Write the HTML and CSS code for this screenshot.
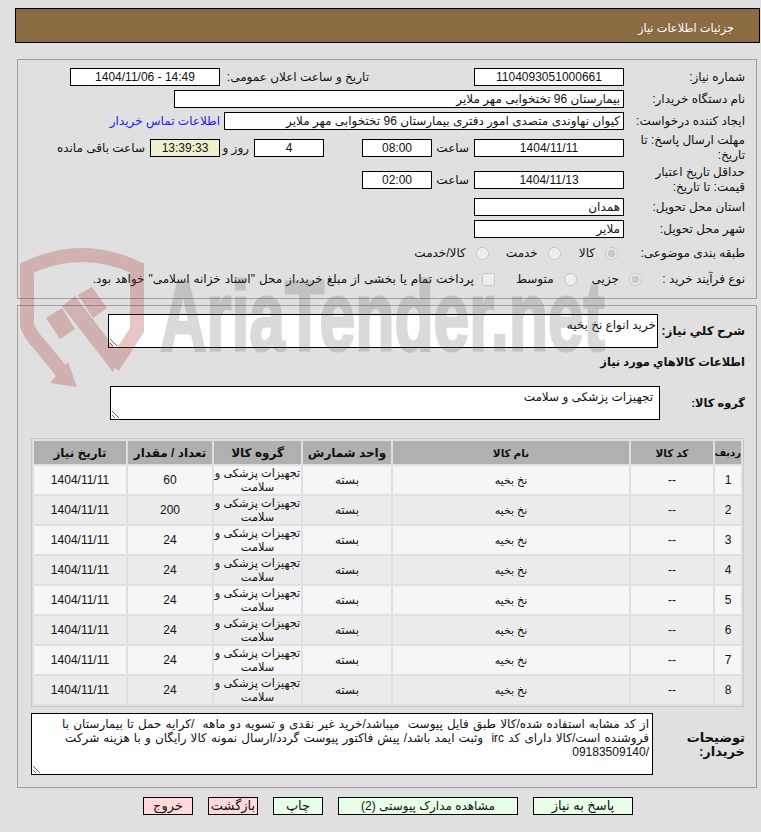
FILE: index.html
```html
<!DOCTYPE html>
<html lang="fa" dir="rtl">
<head>
<meta charset="utf-8">
<title>جزئیات اطلاعات نیاز</title>
<link rel="stylesheet" href="styles.css">
</head>
<body>
<header class="title-bar">جزئیات اطلاعات نیاز</header>

<section class="panel panel-top">
  <div class="row">
    <span class="label">شماره نیاز:</span>
    <span class="box w150 center">1104093051000661</span>
    <span class="label-public">تاریخ و ساعت اعلان عمومی:</span>
    <span class="box w150 center"><bdi>1404/11/06 - 14:49</bdi></span>
  </div>
  <div class="row">
    <span class="label">نام دستگاه خریدار:</span>
    <span class="box w450">بیمارستان 96 تختخوابی مهر ملایر</span>
  </div>
  <div class="row">
    <span class="label">ایجاد کننده درخواست:</span>
    <span class="box w400">کیوان نهاوندی متصدی امور دفتری بیمارستان 96 تختخوابی مهر ملایر</span>
    <a class="contact" href="#">اطلاعات تماس خریدار</a>
  </div>
  <div class="row row-tall">
    <span class="label">مهلت ارسال پاسخ: تا تاریخ:</span>
    <span class="box w150 center">1404/11/11</span>
    <span class="word w42">ساعت</span>
    <span class="box w70 center">08:00</span>
    <span class="spacer-38"></span>
    <span class="box w70 center">4</span>
    <span class="word w34">روز و</span>
    <span class="box w70 center timer">13:39:33</span>
    <span class="word">ساعت باقی مانده</span>
  </div>
  <div class="row row-tall">
    <span class="label">حداقل تاریخ اعتبار قیمت: تا تاریخ:</span>
    <span class="box w150 center">1404/11/13</span>
    <span class="word w42">ساعت</span>
    <span class="box w70 center">02:00</span>
  </div>
  <div class="row">
    <span class="label">استان محل تحویل:</span>
    <span class="box w150">همدان</span>
  </div>
  <div class="row">
    <span class="label">شهر محل تحویل:</span>
    <span class="box w150">ملایر</span>
  </div>
  <div class="row row-option">
    <span class="label">طبقه بندی موضوعی:</span>
    <label class="opt first"><input type="radio" name="kind" checked disabled>کالا</label>
    <label class="opt kind2"><input type="radio" name="kind" disabled>خدمت</label>
    <label class="opt kind3"><input type="radio" name="kind" disabled>کالا/خدمت</label>
  </div>
  <div class="row row-option">
    <span class="label label-short">نوع فرآیند خرید :</span>
    <label class="opt first"><input type="radio" name="proc" checked disabled>جزیی</label>
    <label class="opt proc2"><input type="radio" name="proc" disabled>متوسط</label>
    <label class="opt proc3"><input type="checkbox" disabled>پرداخت تمام یا بخشی از مبلغ خرید،از محل "اسناد خزانه اسلامی" خواهد بود.</label>
  </div>
</section>

<section class="panel panel-main">
  <div class="row-area">
    <span class="label-bold w87">شرح کلي نیاز:</span>
    <textarea class="area w550 desc" readonly>خرید انواع نخ بخیه</textarea>
  </div>
  <h2 class="goods-title">اطلاعات کالاهاي مورد نیاز</h2>
  <div class="row-area">
    <span class="label-bold w85">گروه کالا:</span>
    <textarea class="area w550 group" readonly>تجهیزات پزشکی و سلامت</textarea>
  </div>

  <table class="items">
    <thead>
      <tr>
        <th class="c-idx">ردیف</th><th class="c-code">کد کالا</th><th class="c-name">نام کالا</th><th class="c-unit">واحد شمارش</th><th class="c-group">گروه کالا</th><th class="c-qty">تعداد / مقدار</th><th class="c-date">تاریخ نیاز</th>
      </tr>
    </thead>
    <tbody>
      <tr><td>1</td><td>--</td><td class="name">نخ بخیه</td><td>بسته</td><td class="grp">تجهیزات پزشکی و سلامت</td><td>60</td><td>1404/11/11</td></tr>
      <tr><td>2</td><td>--</td><td class="name">نخ بخیه</td><td>بسته</td><td class="grp">تجهیزات پزشکی و سلامت</td><td>200</td><td>1404/11/11</td></tr>
      <tr><td>3</td><td>--</td><td class="name">نخ بخیه</td><td>بسته</td><td class="grp">تجهیزات پزشکی و سلامت</td><td>24</td><td>1404/11/11</td></tr>
      <tr><td>4</td><td>--</td><td class="name">نخ بخیه</td><td>بسته</td><td class="grp">تجهیزات پزشکی و سلامت</td><td>24</td><td>1404/11/11</td></tr>
      <tr><td>5</td><td>--</td><td class="name">نخ بخیه</td><td>بسته</td><td class="grp">تجهیزات پزشکی و سلامت</td><td>24</td><td>1404/11/11</td></tr>
      <tr><td>6</td><td>--</td><td class="name">نخ بخیه</td><td>بسته</td><td class="grp">تجهیزات پزشکی و سلامت</td><td>24</td><td>1404/11/11</td></tr>
      <tr><td>7</td><td>--</td><td class="name">نخ بخیه</td><td>بسته</td><td class="grp">تجهیزات پزشکی و سلامت</td><td>24</td><td>1404/11/11</td></tr>
      <tr><td>8</td><td>--</td><td class="name">نخ بخیه</td><td>بسته</td><td class="grp">تجهیزات پزشکی و سلامت</td><td>24</td><td>1404/11/11</td></tr>
    </tbody>
  </table>

  <div class="row-area row-note">
    <span class="label-bold w92">توضیحات خریدار:</span>
    <textarea class="area w622 note" readonly>از کد مشابه استفاده شده/کالا طبق فایل پیوست  میباشد/خرید غیر نقدی و تسویه دو ماهه  /کرایه حمل تا بیمارستان با فروشنده است/کالا دارای کد irc  وثبت ایمد باشد/ پیش فاکتور پیوست گردد/ارسال نمونه کالا رایگان و با هزینه شرکت /09183509140</textarea>
  </div>
</section>

<nav class="actions">
  <button class="btn green w100 big" type="button">پاسخ به نیاز</button>
  <button class="btn green w180" type="button">مشاهده مدارک پیوستی (2)</button>
  <button class="btn green w50 big" type="button">چاپ</button>
  <button class="btn pink w50 big" type="button">بازگشت</button>
  <button class="btn pink w50 big" type="button">خروج</button>
</nav>

<svg class="watermark" width="610" height="150" viewBox="0 0 610 150" aria-hidden="true">
  <g class="wm-red">
    <path class="wm-shield" d="M103 117 L127 80 L127 18 Q72 -8 17 18 L17 75 Q20 85 30 95 L52 122"/>
    <polygon points="58,112 67,137 40,133"/>
    <polygon points="36,68 52,58 65,79 50,89"/>
    <polygon points="68,45 82,37 97,58 83,68"/>
    <polygon points="52,56 65,46 108,102 103,122"/>
  </g>
  <text class="wm-text" x="150" y="100" textLength="445" lengthAdjust="spacingAndGlyphs">AriaTender.net</text>
</svg>
</body>
</html>
```

FILE: styles.css
```css
* { box-sizing: border-box; }
html, body { background: #e0e0e0; }
body {
  margin: 8px 1px 0 15px;
  position: relative;
  font: 12px/14px "Liberation Sans", "DejaVu Sans", sans-serif;
  color: #111;
}
.title-bar {
  height: 35px;
  background: #8b6b41;
  border: 1px solid #000;
  color: #fff;
  padding: 0 25px;
  font-size: 11.4px;
  line-height: 38px;
}
.panel {
  margin: 0 3px 0 2px;
  border: 1px solid #a0a0a0;
}
.panel-top { margin-top: 16px; padding: 6px 11px; height: 240px; }
.panel-main { margin-top: 6px; padding: 8px 11px 12px; height: 483px; }
.row { display: flex; align-items: center; height: 22px; }
.row-tall { height: 32px; }
.row-option { height: 26px; }
.label { width: 121px; flex: none; padding-left: 8px; line-height: 15px; }
.label-short { width: 97px; }
.label-public { width: 149px; flex: none; margin-right: 105px; white-space: nowrap; }
.box {
  display: block;
  flex: none;
  height: 18px;
  line-height: 16px;
  background: #fff;
  border: 1px solid #000;
  padding: 0 3px;
  white-space: nowrap;
  overflow: hidden;
}
.center { text-align: center; }
.w150 { width: 150px; }
.w450 { width: 450px; }
.w400 { width: 400px; }
.w70 { width: 70px; }
.timer { background: #f0f0d0; }
.contact { color: #2222ee; text-decoration: none; margin-right: 4px; white-space: nowrap; }
.word { flex: none; white-space: nowrap; padding-right: 5px; }
.w42 { width: 42px; }
.w34 { width: 34px; }
.spacer-38 { width: 38px; flex: none; }
.opt { display: inline-flex; align-items: center; white-space: nowrap; }
.opt input { margin: 0 0 0 10px; width: 13px; height: 13px; }
.first { margin-right: 6px; }
.kind2 { margin-right: 18px; }
.kind3 { margin-right: 17px; }
.proc2 { margin-right: 15px; }
.proc3 { margin-right: 21px; word-spacing: .6px; }
.proc3 input { margin-left: 8px; }
.row-area { display: flex; align-items: flex-start; }
.label-bold { flex: none; font-weight: bold; padding-top: 10px; white-space: nowrap; }
.w87 { width: 87px; }
.w85 { width: 85px; font-size: 11.4px; }
.w92 { width: 92px; padding-top: 18px; white-space: normal; padding-left: 20px; font-size: 13px; }
.area {
  display: block;
  flex: none;
  height: 34px;
  padding: 3px;
  margin: 0;
  border: 1px solid #000;
  border-radius: 0;
  background: #fff;
  font: inherit;
  color: inherit;
  outline: none;
}
.w550 { width: 550px; }
.w622 { width: 622px; }
.desc { padding-right: 1px; }
.group { padding-right: 6px; }
.note { height: 62px; word-spacing: .8px; }
.goods-title {
  margin: 0;
  height: 38px;
  font-size: 11.4px;
  font-weight: bold;
  line-height: 28px;
}
.items {
  margin: 18px 1px 0 0;
  width: 713px;
  table-layout: fixed;
  border-collapse: separate;
  border-spacing: 2px;
  border: 1px solid #c8c8c8;
}
.items th {
  height: 23px;
  background: #b0b0b0;
  padding: 0;
  font-size: 12px;
  font-weight: bold;
  white-space: nowrap;
}
.items td {
  height: 28px;
  padding: 0;
  text-align: center;
}
.items tbody tr:nth-child(odd) td { background: #f6f6f6; }
.items tbody tr:nth-child(even) td { background: #ececec; }
.items .name { font-size: 11px; }
.items .grp { font-size: 11.3px; }
.items .c-idx { width: 26px; font-size: 10px; }
.items .c-code { width: 82px; font-size: 10.5px; }
.items .c-name { width: 236px; font-size: 10.5px; }
.c-unit { width: 88px; }
.c-group { width: 87px; }
.c-qty { width: 84px; }
.c-date { width: 92px; }
.row-note { margin-top: 6px; }
.actions {
  display: flex;
  gap: 15px;
  margin: 9px 127px 0 0;
}
.btn {
  height: 18px;
  padding: 0;
  border: 1px solid #000;
  border-radius: 0;
  font: inherit;
  color: inherit;
}
.big { font-size: 13px; }
.w100 { width: 100px; }
.green { background: #e8ffe8; }
.pink { background: #ffd9d9; }
.w180 { width: 180px; }
.w50 { width: 50px; }
.watermark {
  position: absolute;
  left: -5px;
  top: 242px;
  overflow: visible;
  pointer-events: none;
}
.wm-red { fill: #aa3232; opacity: .27; }
.wm-shield { fill: none; stroke: #aa3232; stroke-width: 14; }
.wm-text {
  direction: ltr;
  font: bold 98px "Liberation Sans Narrow", "Liberation Sans", sans-serif;
  fill: #5a5a5a;
  stroke: #5a5a5a;
  stroke-width: 3px;
  opacity: .22;
}
```
